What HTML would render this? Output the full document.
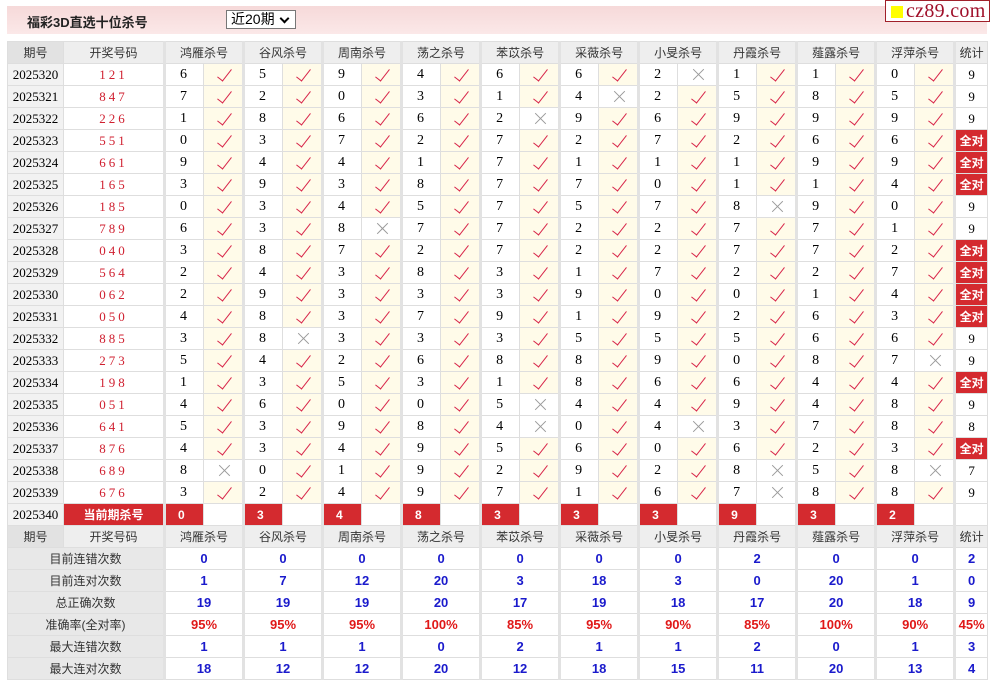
<!DOCTYPE html>
<html><head><meta charset="utf-8"><style>
body{margin:0;background:#fff;width:992px;height:682px;overflow:hidden;font-family:"Liberation Sans","Noto Sans CJK SC",sans-serif;position:relative}
.bar{position:absolute;left:7px;top:6px;width:980px;height:28px;background:linear-gradient(#f6d9d9,#fbe8e8);}
.bar b{position:absolute;left:20px;top:6px;font-size:13px;color:#222}
.sel{position:absolute;left:226px;top:10px;width:70px;height:19px;border:1px solid #777;background:#fff;font-size:14px;box-sizing:border-box;padding-left:4px;line-height:17px;color:#000}
.sel:after{content:"";position:absolute;right:7px;top:4px;width:5px;height:5px;border:solid #000;border-width:0 2px 2px 0;transform:rotate(45deg)}
.logo{position:absolute;left:885px;top:0;width:105px;height:22px;border:1px solid #a0202a;background:#fff;font-family:"Liberation Serif",serif;font-size:20px;color:#a0102a;line-height:21px;box-sizing:border-box;padding-left:20px;letter-spacing:0.3px}
.logo:before{content:"";position:absolute;left:5px;top:5px;width:12px;height:12px;background:#ff0}
table{position:absolute;left:7px;top:41px;border-collapse:collapse;table-layout:fixed;width:980px}
td{height:21px;padding:0;border:1px solid #dedede;text-align:center;font-size:12px;overflow:hidden;white-space:nowrap}
.h td{background:#eeeeee;color:#333}
.h td.p{background:#e2e2e2}
td.g{border-right:3px solid #e2e2e2}
td.pd{background:#f2f2f2;font-family:"Liberation Serif",serif;font-size:13px}
td.c{color:#d02030;font-family:"Liberation Serif",serif;letter-spacing:3px;font-size:13px}
td.n{font-family:"Liberation Serif",serif;font-size:14px;text-align:left;padding-left:14px}
td.k{background:#fffbe9;position:relative}
td.x{background:#fff;position:relative}
td.k:after{content:"";position:absolute;left:17px;top:2px;width:6px;height:14px;border:solid #d8264a;border-width:0 1.6px 1.6px 0;transform:rotate(38deg)}
td.x:before,td.x:after{content:"";position:absolute;left:13px;top:10px;width:15px;height:1px;background:#999;transform:rotate(45deg)}
td.x:after{transform:rotate(-45deg)}
td.s{font-family:"Liberation Serif",serif;font-size:13px}
td.a{background:#d42a2f;color:#fff;font-weight:bold;font-size:12px}
td.r{background:#d42a2f;color:#fff;font-weight:bold;text-align:left;padding-left:12px;font-size:12px}
td.w{background:#fff}
td.l{background:#e8e8e8;color:#333;font-size:12px}
td.v{color:#1a1acc;font-weight:bold;font-size:13px}
td.v.pc{color:#e01818}
</style></head><body>
<div class="bar"><b>福彩3D直选十位杀号</b></div>
<div class="sel">近20期</div>
<div class="logo">cz89.com</div>
<table>
<colgroup><col style="width:56px"><col style="width:101px"><col style="width:39px"><col style="width:40px"><col style="width:39px"><col style="width:40px"><col style="width:39px"><col style="width:40px"><col style="width:39px"><col style="width:40px"><col style="width:39px"><col style="width:40px"><col style="width:39px"><col style="width:40px"><col style="width:39px"><col style="width:40px"><col style="width:39px"><col style="width:40px"><col style="width:39px"><col style="width:40px"><col style="width:39px"><col style="width:40px"><col style="width:33px"></colgroup>
<tr class="h"><td class="p">期号</td><td class="g">开奖号码</td><td colspan="2" class="g">鸿雁杀号</td><td colspan="2" class="g">谷风杀号</td><td colspan="2" class="g">周南杀号</td><td colspan="2" class="g">荡之杀号</td><td colspan="2" class="g">苯苡杀号</td><td colspan="2" class="g">采薇杀号</td><td colspan="2" class="g">小旻杀号</td><td colspan="2" class="g">丹霞杀号</td><td colspan="2" class="g">薤露杀号</td><td colspan="2" class="g">浮萍杀号</td><td>统计</td></tr>
<tr><td class="pd">2025320</td><td class="c g">121</td><td class="n">6</td><td class="k g"></td><td class="n">5</td><td class="k g"></td><td class="n">9</td><td class="k g"></td><td class="n">4</td><td class="k g"></td><td class="n">6</td><td class="k g"></td><td class="n">6</td><td class="k g"></td><td class="n">2</td><td class="x g"></td><td class="n">1</td><td class="k g"></td><td class="n">1</td><td class="k g"></td><td class="n">0</td><td class="k g"></td><td class="s">9</td></tr>
<tr><td class="pd">2025321</td><td class="c g">847</td><td class="n">7</td><td class="k g"></td><td class="n">2</td><td class="k g"></td><td class="n">0</td><td class="k g"></td><td class="n">3</td><td class="k g"></td><td class="n">1</td><td class="k g"></td><td class="n">4</td><td class="x g"></td><td class="n">2</td><td class="k g"></td><td class="n">5</td><td class="k g"></td><td class="n">8</td><td class="k g"></td><td class="n">5</td><td class="k g"></td><td class="s">9</td></tr>
<tr><td class="pd">2025322</td><td class="c g">226</td><td class="n">1</td><td class="k g"></td><td class="n">8</td><td class="k g"></td><td class="n">6</td><td class="k g"></td><td class="n">6</td><td class="k g"></td><td class="n">2</td><td class="x g"></td><td class="n">9</td><td class="k g"></td><td class="n">6</td><td class="k g"></td><td class="n">9</td><td class="k g"></td><td class="n">9</td><td class="k g"></td><td class="n">9</td><td class="k g"></td><td class="s">9</td></tr>
<tr><td class="pd">2025323</td><td class="c g">551</td><td class="n">0</td><td class="k g"></td><td class="n">3</td><td class="k g"></td><td class="n">7</td><td class="k g"></td><td class="n">2</td><td class="k g"></td><td class="n">7</td><td class="k g"></td><td class="n">2</td><td class="k g"></td><td class="n">7</td><td class="k g"></td><td class="n">2</td><td class="k g"></td><td class="n">6</td><td class="k g"></td><td class="n">6</td><td class="k g"></td><td class="a">全对</td></tr>
<tr><td class="pd">2025324</td><td class="c g">661</td><td class="n">9</td><td class="k g"></td><td class="n">4</td><td class="k g"></td><td class="n">4</td><td class="k g"></td><td class="n">1</td><td class="k g"></td><td class="n">7</td><td class="k g"></td><td class="n">1</td><td class="k g"></td><td class="n">1</td><td class="k g"></td><td class="n">1</td><td class="k g"></td><td class="n">9</td><td class="k g"></td><td class="n">9</td><td class="k g"></td><td class="a">全对</td></tr>
<tr><td class="pd">2025325</td><td class="c g">165</td><td class="n">3</td><td class="k g"></td><td class="n">9</td><td class="k g"></td><td class="n">3</td><td class="k g"></td><td class="n">8</td><td class="k g"></td><td class="n">7</td><td class="k g"></td><td class="n">7</td><td class="k g"></td><td class="n">0</td><td class="k g"></td><td class="n">1</td><td class="k g"></td><td class="n">1</td><td class="k g"></td><td class="n">4</td><td class="k g"></td><td class="a">全对</td></tr>
<tr><td class="pd">2025326</td><td class="c g">185</td><td class="n">0</td><td class="k g"></td><td class="n">3</td><td class="k g"></td><td class="n">4</td><td class="k g"></td><td class="n">5</td><td class="k g"></td><td class="n">7</td><td class="k g"></td><td class="n">5</td><td class="k g"></td><td class="n">7</td><td class="k g"></td><td class="n">8</td><td class="x g"></td><td class="n">9</td><td class="k g"></td><td class="n">0</td><td class="k g"></td><td class="s">9</td></tr>
<tr><td class="pd">2025327</td><td class="c g">789</td><td class="n">6</td><td class="k g"></td><td class="n">3</td><td class="k g"></td><td class="n">8</td><td class="x g"></td><td class="n">7</td><td class="k g"></td><td class="n">7</td><td class="k g"></td><td class="n">2</td><td class="k g"></td><td class="n">2</td><td class="k g"></td><td class="n">7</td><td class="k g"></td><td class="n">7</td><td class="k g"></td><td class="n">1</td><td class="k g"></td><td class="s">9</td></tr>
<tr><td class="pd">2025328</td><td class="c g">040</td><td class="n">3</td><td class="k g"></td><td class="n">8</td><td class="k g"></td><td class="n">7</td><td class="k g"></td><td class="n">2</td><td class="k g"></td><td class="n">7</td><td class="k g"></td><td class="n">2</td><td class="k g"></td><td class="n">2</td><td class="k g"></td><td class="n">7</td><td class="k g"></td><td class="n">7</td><td class="k g"></td><td class="n">2</td><td class="k g"></td><td class="a">全对</td></tr>
<tr><td class="pd">2025329</td><td class="c g">564</td><td class="n">2</td><td class="k g"></td><td class="n">4</td><td class="k g"></td><td class="n">3</td><td class="k g"></td><td class="n">8</td><td class="k g"></td><td class="n">3</td><td class="k g"></td><td class="n">1</td><td class="k g"></td><td class="n">7</td><td class="k g"></td><td class="n">2</td><td class="k g"></td><td class="n">2</td><td class="k g"></td><td class="n">7</td><td class="k g"></td><td class="a">全对</td></tr>
<tr><td class="pd">2025330</td><td class="c g">062</td><td class="n">2</td><td class="k g"></td><td class="n">9</td><td class="k g"></td><td class="n">3</td><td class="k g"></td><td class="n">3</td><td class="k g"></td><td class="n">3</td><td class="k g"></td><td class="n">9</td><td class="k g"></td><td class="n">0</td><td class="k g"></td><td class="n">0</td><td class="k g"></td><td class="n">1</td><td class="k g"></td><td class="n">4</td><td class="k g"></td><td class="a">全对</td></tr>
<tr><td class="pd">2025331</td><td class="c g">050</td><td class="n">4</td><td class="k g"></td><td class="n">8</td><td class="k g"></td><td class="n">3</td><td class="k g"></td><td class="n">7</td><td class="k g"></td><td class="n">9</td><td class="k g"></td><td class="n">1</td><td class="k g"></td><td class="n">9</td><td class="k g"></td><td class="n">2</td><td class="k g"></td><td class="n">6</td><td class="k g"></td><td class="n">3</td><td class="k g"></td><td class="a">全对</td></tr>
<tr><td class="pd">2025332</td><td class="c g">885</td><td class="n">3</td><td class="k g"></td><td class="n">8</td><td class="x g"></td><td class="n">3</td><td class="k g"></td><td class="n">3</td><td class="k g"></td><td class="n">3</td><td class="k g"></td><td class="n">5</td><td class="k g"></td><td class="n">5</td><td class="k g"></td><td class="n">5</td><td class="k g"></td><td class="n">6</td><td class="k g"></td><td class="n">6</td><td class="k g"></td><td class="s">9</td></tr>
<tr><td class="pd">2025333</td><td class="c g">273</td><td class="n">5</td><td class="k g"></td><td class="n">4</td><td class="k g"></td><td class="n">2</td><td class="k g"></td><td class="n">6</td><td class="k g"></td><td class="n">8</td><td class="k g"></td><td class="n">8</td><td class="k g"></td><td class="n">9</td><td class="k g"></td><td class="n">0</td><td class="k g"></td><td class="n">8</td><td class="k g"></td><td class="n">7</td><td class="x g"></td><td class="s">9</td></tr>
<tr><td class="pd">2025334</td><td class="c g">198</td><td class="n">1</td><td class="k g"></td><td class="n">3</td><td class="k g"></td><td class="n">5</td><td class="k g"></td><td class="n">3</td><td class="k g"></td><td class="n">1</td><td class="k g"></td><td class="n">8</td><td class="k g"></td><td class="n">6</td><td class="k g"></td><td class="n">6</td><td class="k g"></td><td class="n">4</td><td class="k g"></td><td class="n">4</td><td class="k g"></td><td class="a">全对</td></tr>
<tr><td class="pd">2025335</td><td class="c g">051</td><td class="n">4</td><td class="k g"></td><td class="n">6</td><td class="k g"></td><td class="n">0</td><td class="k g"></td><td class="n">0</td><td class="k g"></td><td class="n">5</td><td class="x g"></td><td class="n">4</td><td class="k g"></td><td class="n">4</td><td class="k g"></td><td class="n">9</td><td class="k g"></td><td class="n">4</td><td class="k g"></td><td class="n">8</td><td class="k g"></td><td class="s">9</td></tr>
<tr><td class="pd">2025336</td><td class="c g">641</td><td class="n">5</td><td class="k g"></td><td class="n">3</td><td class="k g"></td><td class="n">9</td><td class="k g"></td><td class="n">8</td><td class="k g"></td><td class="n">4</td><td class="x g"></td><td class="n">0</td><td class="k g"></td><td class="n">4</td><td class="x g"></td><td class="n">3</td><td class="k g"></td><td class="n">7</td><td class="k g"></td><td class="n">8</td><td class="k g"></td><td class="s">8</td></tr>
<tr><td class="pd">2025337</td><td class="c g">876</td><td class="n">4</td><td class="k g"></td><td class="n">3</td><td class="k g"></td><td class="n">4</td><td class="k g"></td><td class="n">9</td><td class="k g"></td><td class="n">5</td><td class="k g"></td><td class="n">6</td><td class="k g"></td><td class="n">0</td><td class="k g"></td><td class="n">6</td><td class="k g"></td><td class="n">2</td><td class="k g"></td><td class="n">3</td><td class="k g"></td><td class="a">全对</td></tr>
<tr><td class="pd">2025338</td><td class="c g">689</td><td class="n">8</td><td class="x g"></td><td class="n">0</td><td class="k g"></td><td class="n">1</td><td class="k g"></td><td class="n">9</td><td class="k g"></td><td class="n">2</td><td class="k g"></td><td class="n">9</td><td class="k g"></td><td class="n">2</td><td class="k g"></td><td class="n">8</td><td class="x g"></td><td class="n">5</td><td class="k g"></td><td class="n">8</td><td class="x g"></td><td class="s">7</td></tr>
<tr><td class="pd">2025339</td><td class="c g">676</td><td class="n">3</td><td class="k g"></td><td class="n">2</td><td class="k g"></td><td class="n">4</td><td class="k g"></td><td class="n">9</td><td class="k g"></td><td class="n">7</td><td class="k g"></td><td class="n">1</td><td class="k g"></td><td class="n">6</td><td class="k g"></td><td class="n">7</td><td class="x g"></td><td class="n">8</td><td class="k g"></td><td class="n">8</td><td class="k g"></td><td class="s">9</td></tr>
<tr><td class="pd">2025340</td><td class="a g">当前期杀号</td><td class="r">0</td><td class="w g"></td><td class="r">3</td><td class="w g"></td><td class="r">4</td><td class="w g"></td><td class="r">8</td><td class="w g"></td><td class="r">3</td><td class="w g"></td><td class="r">3</td><td class="w g"></td><td class="r">3</td><td class="w g"></td><td class="r">9</td><td class="w g"></td><td class="r">3</td><td class="w g"></td><td class="r">2</td><td class="w g"></td><td class="w"></td></tr>
<tr class="h"><td class="p">期号</td><td class="g">开奖号码</td><td colspan="2" class="g">鸿雁杀号</td><td colspan="2" class="g">谷风杀号</td><td colspan="2" class="g">周南杀号</td><td colspan="2" class="g">荡之杀号</td><td colspan="2" class="g">苯苡杀号</td><td colspan="2" class="g">采薇杀号</td><td colspan="2" class="g">小旻杀号</td><td colspan="2" class="g">丹霞杀号</td><td colspan="2" class="g">薤露杀号</td><td colspan="2" class="g">浮萍杀号</td><td>统计</td></tr>
<tr><td colspan="2" class="l g">目前连错次数</td><td colspan="2" class="v g">0</td><td colspan="2" class="v g">0</td><td colspan="2" class="v g">0</td><td colspan="2" class="v g">0</td><td colspan="2" class="v g">0</td><td colspan="2" class="v g">0</td><td colspan="2" class="v g">0</td><td colspan="2" class="v g">2</td><td colspan="2" class="v g">0</td><td colspan="2" class="v g">0</td><td class="v">2</td></tr>
<tr><td colspan="2" class="l g">目前连对次数</td><td colspan="2" class="v g">1</td><td colspan="2" class="v g">7</td><td colspan="2" class="v g">12</td><td colspan="2" class="v g">20</td><td colspan="2" class="v g">3</td><td colspan="2" class="v g">18</td><td colspan="2" class="v g">3</td><td colspan="2" class="v g">0</td><td colspan="2" class="v g">20</td><td colspan="2" class="v g">1</td><td class="v">0</td></tr>
<tr><td colspan="2" class="l g">总正确次数</td><td colspan="2" class="v g">19</td><td colspan="2" class="v g">19</td><td colspan="2" class="v g">19</td><td colspan="2" class="v g">20</td><td colspan="2" class="v g">17</td><td colspan="2" class="v g">19</td><td colspan="2" class="v g">18</td><td colspan="2" class="v g">17</td><td colspan="2" class="v g">20</td><td colspan="2" class="v g">18</td><td class="v">9</td></tr>
<tr><td colspan="2" class="l g">准确率(全对率)</td><td colspan="2" class="v pc g">95%</td><td colspan="2" class="v pc g">95%</td><td colspan="2" class="v pc g">95%</td><td colspan="2" class="v pc g">100%</td><td colspan="2" class="v pc g">85%</td><td colspan="2" class="v pc g">95%</td><td colspan="2" class="v pc g">90%</td><td colspan="2" class="v pc g">85%</td><td colspan="2" class="v pc g">100%</td><td colspan="2" class="v pc g">90%</td><td class="v pc">45%</td></tr>
<tr><td colspan="2" class="l g">最大连错次数</td><td colspan="2" class="v g">1</td><td colspan="2" class="v g">1</td><td colspan="2" class="v g">1</td><td colspan="2" class="v g">0</td><td colspan="2" class="v g">2</td><td colspan="2" class="v g">1</td><td colspan="2" class="v g">1</td><td colspan="2" class="v g">2</td><td colspan="2" class="v g">0</td><td colspan="2" class="v g">1</td><td class="v">3</td></tr>
<tr><td colspan="2" class="l g">最大连对次数</td><td colspan="2" class="v g">18</td><td colspan="2" class="v g">12</td><td colspan="2" class="v g">12</td><td colspan="2" class="v g">20</td><td colspan="2" class="v g">12</td><td colspan="2" class="v g">18</td><td colspan="2" class="v g">15</td><td colspan="2" class="v g">11</td><td colspan="2" class="v g">20</td><td colspan="2" class="v g">13</td><td class="v">4</td></tr>
</table>
</body></html>
